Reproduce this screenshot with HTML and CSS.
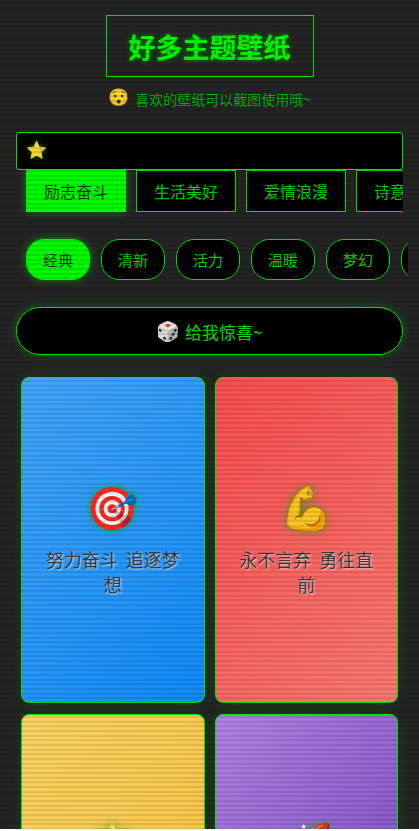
FILE: index.html
```html
<!DOCTYPE html>
<html lang="zh-CN">
<head>
<meta charset="utf-8">
<meta name="viewport" content="width=device-width, initial-scale=1">
<title>好多主题壁纸</title>
<link rel="stylesheet" href="styles.css">
</head>
<body>
<div class="screen">
  <header class="header">
    <h1 class="title">好多主题壁纸</h1>
    <p class="subtitle"><span class="subtitle-icon">😯</span>喜欢的壁纸可以截图使用哦~</p>
  </header>
  <main class="content">
    <div class="banner">⭐</div>
    <nav class="tabs">
      <button class="tab active">励志奋斗</button>
      <button class="tab">生活美好</button>
      <button class="tab">爱情浪漫</button>
      <button class="tab">诗意</button>
    </nav>
    <div class="pills">
      <button class="pill active">经典</button>
      <button class="pill">清新</button>
      <button class="pill">活力</button>
      <button class="pill">温暖</button>
      <button class="pill">梦幻</button>
      <button class="pill" aria-label="更多"></button>
    </div>
    <button class="surprise"><span class="dice">🎲</span>给我惊喜~</button>
    <section class="grid">
      <article class="card blue"><span class="card-icon">🎯</span><p class="card-text">努力奋斗  追逐梦想</p></article>
      <article class="card red"><span class="card-icon">💪</span><p class="card-text">永不言弃  勇往直前</p></article>
      <article class="card yellow"><span class="card-icon">🌟</span><p class="card-text"></p></article>
      <article class="card purple"><span class="card-icon">🚀</span><p class="card-text"></p></article>
    </section>
  </main>
</div>
</body>
</html>
```
FILE: styles.css
```css
* { box-sizing: border-box; }

body {
  margin: 0;
  background: #fff;
  font-family: "Noto Sans CJK SC", "Noto Color Emoji", sans-serif;
}

button { font-family: inherit; cursor: pointer; }

.screen {
  position: relative;
  height: calc(100vh - 2px);
  overflow: hidden;
  padding: 15px 16px 0;
  background: #242424;
  color: #00e000;
}

/* Scan lines over the whole screen */
.screen::after {
  content: "";
  position: absolute;
  inset: 0;
  z-index: 5;
  pointer-events: none;
  background-image: linear-gradient(
    rgba(0, 0, 0, 0.01) 0 1px, rgba(0, 0, 0, 0.04) 1px 2px,
    rgba(0, 0, 0, 0.12) 2px 4px, rgba(0, 0, 0, 0.04) 4px 5px,
    rgba(0, 0, 0, 0.01) 5px 6px, rgba(0, 0, 0, 0.04) 6px 7px,
    rgba(0, 0, 0, 0.12) 7px 9px, rgba(0, 0, 0, 0.02) 9px 11px,
    rgba(0, 0, 0, 0.12) 11px 13px, rgba(0, 0, 0, 0.04) 13px 14px);
  background-size: 100% 14px;
}

.header { display: flex; flex-direction: column; align-items: center; }

.title {
  margin: 0;
  padding: 13px 22px 11px;
  border: 1px solid #00e800;
  color: #00ff00;
  font-size: 27px;
  line-height: 36px;
  text-shadow: 0 0 5px #00a000;
}

.subtitle {
  display: flex;
  align-items: center;
  gap: 6px;
  margin: 9px 0 0;
  color: #00b400;
  font-size: 14px;
  line-height: 26px;
}

.subtitle-icon { font-size: 17px; line-height: 20px; align-self: flex-start; }

.banner {
  margin-top: 20px;
  padding: 0 9px 4px;
  border: 1px solid #00f000;
  border-radius: 3px;
  background: #000;
  font-size: 17px;
  line-height: 32px;
  text-shadow: 0 0 5px #008000;
}

.tabs {
  display: flex;
  gap: 10px;
  padding: 0 0 17px 10px;
  overflow: hidden;
}

.tab {
  flex: none;
  height: 42px;
  padding: 0 17px;
  border: 1px solid #00e800;
  background: #000;
  color: #00d800;
  font-size: 16px;
}

.pills {
  display: flex;
  gap: 11px;
  margin-right: -5px;
  padding: 10px 0 17px 10px;
  overflow: hidden;
}

.pill {
  flex: none;
  min-width: 64px;
  height: 41px;
  padding: 0 16px;
  border: 1px solid #00e800;
  border-radius: 18px;
  background: #000;
  color: #00d800;
  font-size: 15px;
}

.tab.active, .pill.active {
  border-color: #00ff00;
  background: #00ff00;
  color: #003c00;
  box-shadow: 0 0 8px rgba(0, 255, 0, 0.5);
}

.surprise {
  display: flex;
  align-items: center;
  justify-content: center;
  gap: 5px;
  width: 100%;
  height: 48px;
  margin-top: 10px;
  border: 1px solid #00e800;
  border-radius: 24px;
  background: #000;
  color: #00e800;
  font-size: 17px;
  box-shadow: 0 0 10px rgba(0, 255, 0, 0.3);
}

.dice { padding-bottom: 4px; font-size: 19px; }

.grid {
  display: grid;
  grid-template-columns: 1fr 1fr;
  gap: 11px 10px;
  margin-top: 22px;
  padding: 0 5px;
}

.card {
  display: flex;
  flex-direction: column;
  align-items: center;
  justify-content: center;
  gap: 16px;
  aspect-ratio: 9 / 16;
  padding: 0 20px 4px;
  border: 1px solid #00f000;
  border-radius: 8px;
  color: #3c3c3c;
  box-shadow: 0 0 14px rgba(0, 255, 0, 0.14);
}

.card-icon {
  font-size: 42px;
  line-height: 52px;
  text-shadow: 0 0 8px rgba(0, 180, 0, 0.8);
}

.card-text {
  min-height: 50px;
  margin: 0;
  font-size: 18px;
  line-height: 25px;
  text-align: center;
  white-space: pre-wrap;
  text-shadow: 1px 1px 2px rgba(255, 255, 255, 0.8);
}

.blue { background: linear-gradient(135deg, #45aaff, #108eff); }
.red { background: linear-gradient(135deg, #ff5050, #ff7b72); }
.yellow { background: linear-gradient(135deg, #ffdb66, #ffbe3a); }
.purple { background: linear-gradient(135deg, #b685e8, #7040c0); }
```
